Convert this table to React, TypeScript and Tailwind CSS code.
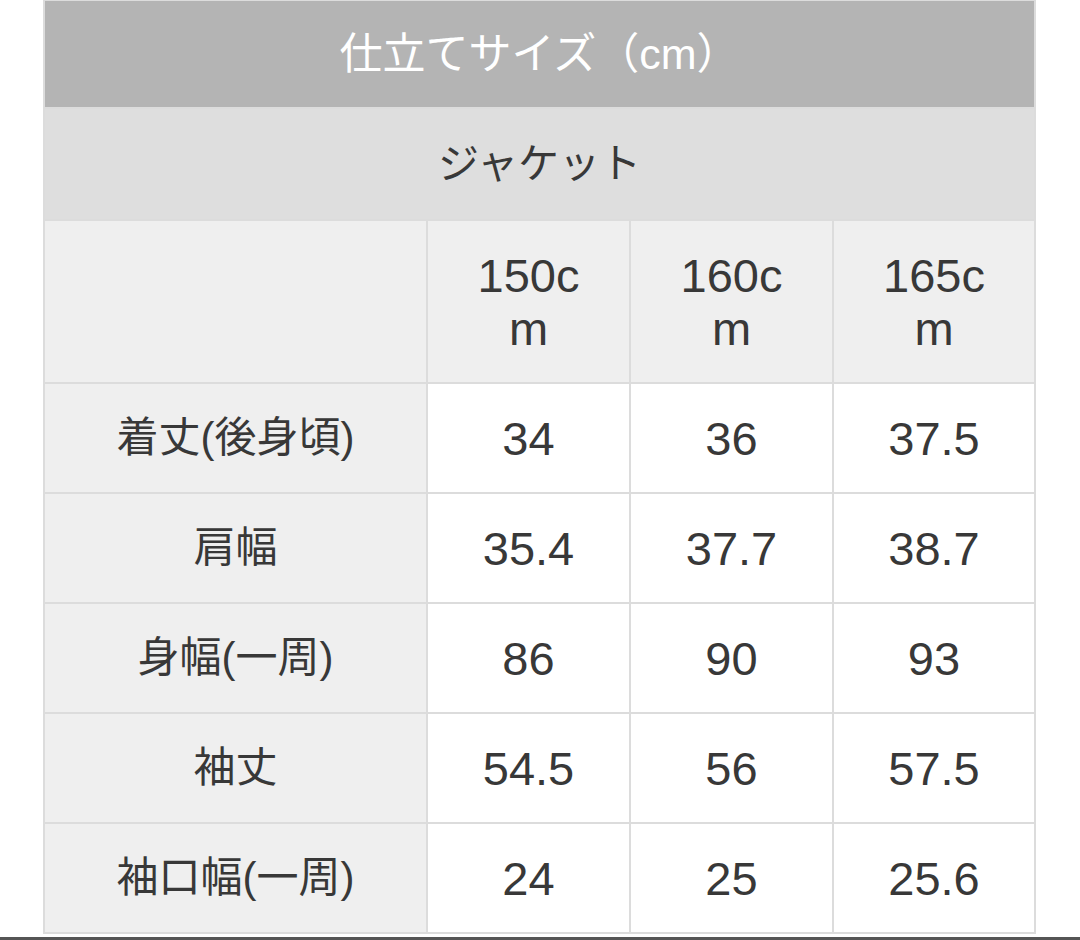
import React from "react";

const sizes = ["150cm", "160cm", "165cm"];
const rows: [string, string[]][] = [
  ["着丈(後身頃)", ["34", "36", "37.5"]],
  ["肩幅", ["35.4", "37.7", "38.7"]],
  ["身幅(一周)", ["86", "90", "93"]],
  ["袖丈", ["54.5", "56", "57.5"]],
  ["袖口幅(一周)", ["24", "25", "25.6"]],
];

export default function App() {
  return (
    <div className="w-[1080px] h-[940px] bg-white overflow-hidden flex flex-col font-['Liberation_Sans','Noto_Sans_CJK_JP',sans-serif] text-[#383838]">
      <div className="ml-[43px] w-[993px] bg-[#dcdcdc] pt-[1px] px-[2px] pb-[2px] flex flex-col gap-[2px]">
        <div className="h-[106px] bg-[#b4b4b4] flex items-center justify-center text-white text-[43px] leading-none">
          仕立てサイズ（cm）
        </div>
        <div className="h-[110px] bg-[#dedede] flex items-center justify-center text-[41px] leading-none">
          ジャケット
        </div>
        <div className="grid grid-cols-[381px_201px_201px_200px] gap-[2px]">
          <div className="h-[161px] bg-[#efefef]" />
          {sizes.map((s) => (
            <div
              key={s}
              className="h-[161px] bg-[#efefef] flex items-center justify-center px-[44px] text-center text-[47px] leading-[53px] break-all"
            >
              {s}
            </div>
          ))}
          {rows.map(([label, vals]) => (
            <React.Fragment key={label}>
              <div className="h-[108px] bg-[#efefef] flex items-center justify-center text-[42px] leading-none">
                {label}
              </div>
              {vals.map((v, i) => (
                <div
                  key={i}
                  className="h-[108px] bg-white flex items-center justify-center text-[47px] leading-none"
                >
                  {v}
                </div>
              ))}
            </React.Fragment>
          ))}
        </div>
      </div>
      <div className="mt-[3px] h-[3px] bg-[#555555]" />
    </div>
  );
}
